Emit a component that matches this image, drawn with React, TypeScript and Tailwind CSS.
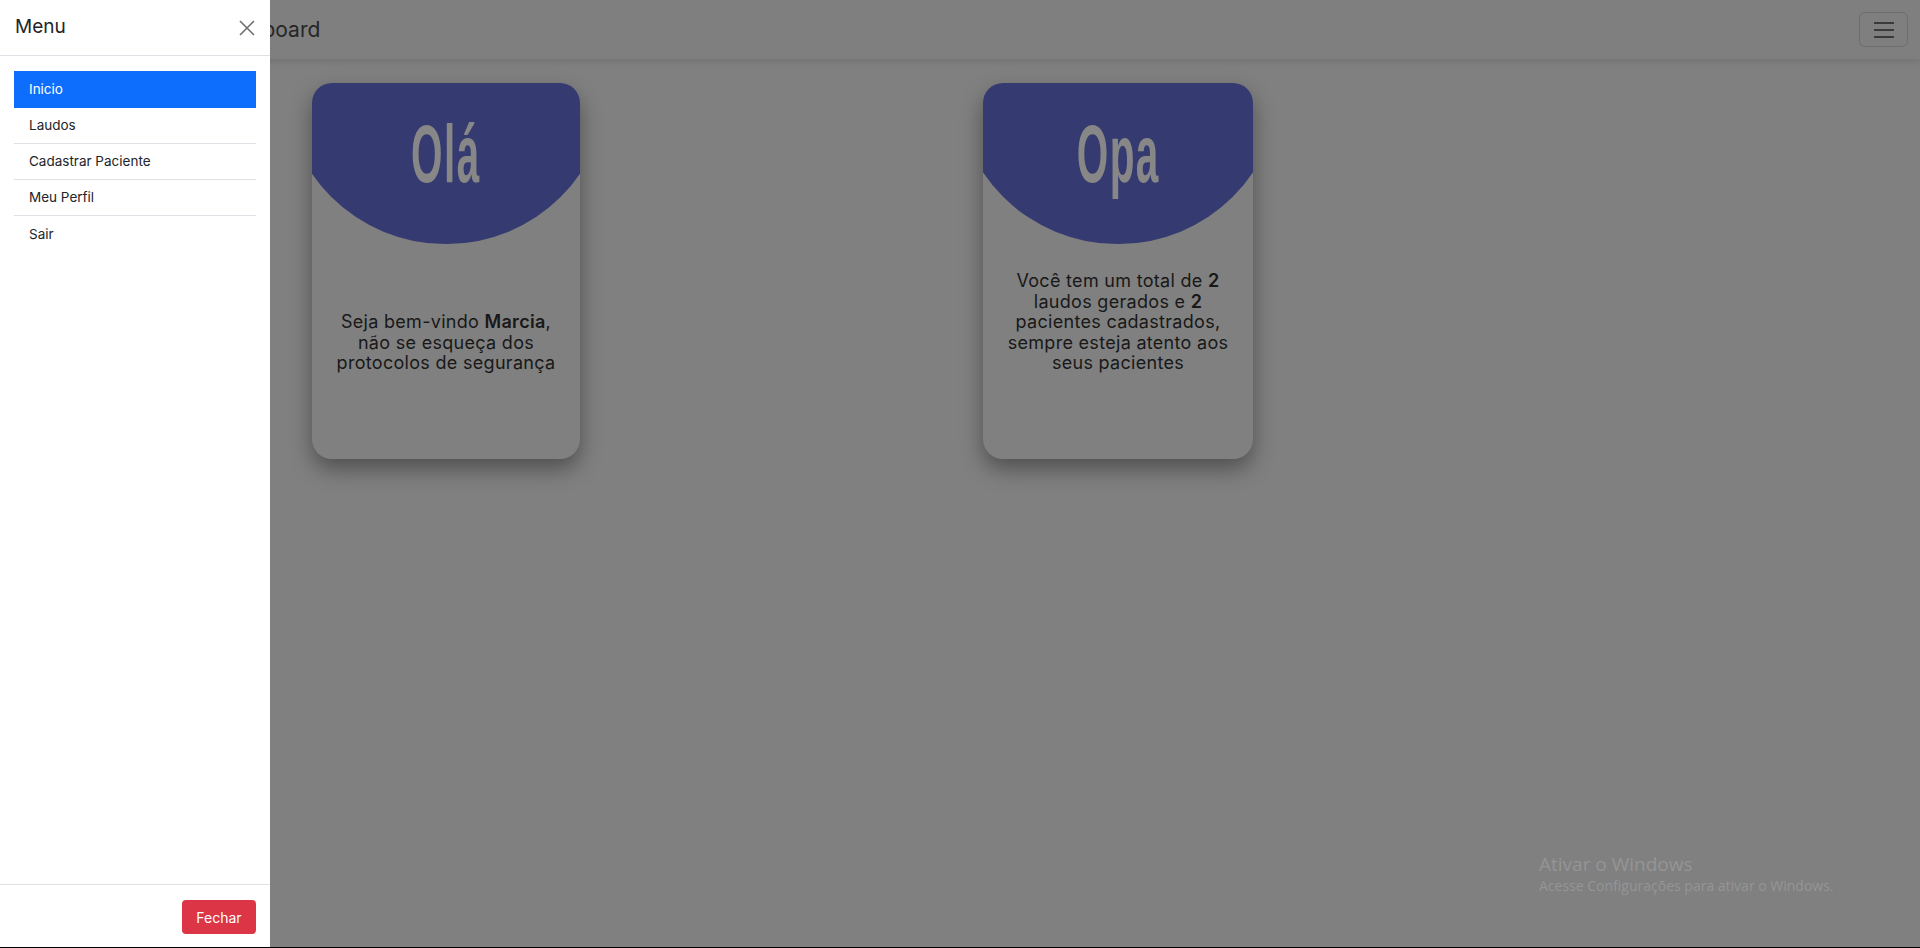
const menuItems = ["Inicio", "Laudos", "Cadastrar Paciente", "Meu Perfil", "Sair"];

function CloseIcon() {
  return (
    <svg width="16" height="16" viewBox="0 0 16 16" fill="none" stroke="#6f6f6f" strokeWidth="1.6">
      <path d="M1 1L15 15M15 1L1 15" />
    </svg>
  );
}

function Card({ title, width, children }: { title: string; width: string; children: React.ReactNode }) {
  return (
    <div
      className={`relative flex h-[376px] flex-col overflow-hidden rounded-[20px] bg-[#808080] shadow-[0_10px_22px_rgba(0,0,0,0.38)] ${width}`}
    >
      <div className="absolute left-1/2 top-[-161px] h-[322px] w-[324px] -translate-x-1/2 rounded-full bg-[#353b71]" />
      <div className="relative flex justify-center pt-[31px]">
        <span className="inline-block scale-x-[0.5] font-['Liberation_Sans'] text-[81px] font-bold leading-[80px] tracking-[3px] text-[#878787]">
          {title}
        </span>
      </div>
      <div className="relative flex flex-1 flex-col justify-end px-2 pb-[85px] text-center text-[18px] leading-[20.6px] tracking-[0.3px] text-[#181818]">
        {children}
      </div>
    </div>
  );
}

export default function App() {
  return (
    <div className="relative h-[948px] w-full overflow-hidden bg-[#808080] font-['Inter',sans-serif]">
      {/* Navbar behind backdrop */}
      <nav className="relative z-10 flex h-[59px] items-center justify-between bg-[#7f7f7f] pl-[212px] pr-3 shadow-[0_2px_8px_rgba(0,0,0,0.12)]">
        <span className="text-[21px] text-[#262626]">Dashboard</span>
        <button className="flex h-[35px] w-[49px] flex-col items-center justify-center gap-[5px] rounded-md border border-[#6e6e6e]">
          <span className="block h-[2px] w-[20px] bg-[#3a3a3a]" />
          <span className="block h-[2px] w-[20px] bg-[#3a3a3a]" />
          <span className="block h-[2px] w-[20px] bg-[#3a3a3a]" />
        </button>
      </nav>

      {/* Cards */}
      <main className="grid grid-cols-[268px_270px] gap-x-[403px] pl-[312px] pt-[24px]">
        <Card title="Olá" width="w-[268px]">
          <p>
            Seja bem-vindo <b className="font-semibold">Marcia</b>,
            <br />
            não se esqueça dos
            <br />
            protocolos de segurança
          </p>
        </Card>
        <Card title="Opa" width="w-[270px]">
          <p>
            Você tem um total de <b className="font-semibold">2</b>
            <br />
            laudos gerados e <b className="font-semibold">2</b>
            <br />
            pacientes cadastrados,
            <br />
            sempre esteja atento aos
            <br />
            seus pacientes
          </p>
        </Card>
      </main>

      {/* Windows watermark */}
      <div className="absolute left-[1539px] top-[852px] font-['Open_Sans',sans-serif] text-[#959595]">
        <div className="text-[19px] leading-[24px]">Ativar o Windows</div>
        <div className="text-[14px] leading-[20px]">Acesse Configurações para ativar o Windows.</div>
      </div>

      {/* Offcanvas */}
      <aside className="absolute left-0 top-0 z-20 flex h-full w-[270px] flex-col bg-white">
        <div className="flex h-[56px] items-center justify-between border-b border-[#dee2e6] pl-[15px] pr-[15px]">
          <h5 className="text-[19px] text-[#212529]">Menu</h5>
          <button className="flex h-[16px] w-[16px] items-center justify-center">
            <CloseIcon />
          </button>
        </div>
        <div className="flex-1 px-[14px] pt-[15px]">
          <ul className="flex flex-col">
            {menuItems.map((item, i) => (
              <li
                key={item}
                className={
                  i === 0
                    ? "flex h-[37px] items-center bg-[#0d6efd] pl-[15px] text-[13.5px] text-white"
                    : i === menuItems.length - 1
                    ? "flex h-[36px] items-center pl-[15px] text-[13.5px] text-[#212529]"
                    : "flex h-[36px] items-center border-b border-[#dee2e6] pl-[15px] text-[13.5px] text-[#212529]"
                }
              >
                {item}
              </li>
            ))}
          </ul>
        </div>
        <div className="flex justify-end border-t border-[#dee2e6] px-[14px] pb-[14px] pt-[15px]">
          <button className="h-[34px] w-[74px] rounded bg-[#dc3545] text-[14px] text-white">Fechar</button>
        </div>
      </aside>

      <div className="absolute bottom-0 left-0 z-30 h-px w-full bg-black" />
    </div>
  );
}
